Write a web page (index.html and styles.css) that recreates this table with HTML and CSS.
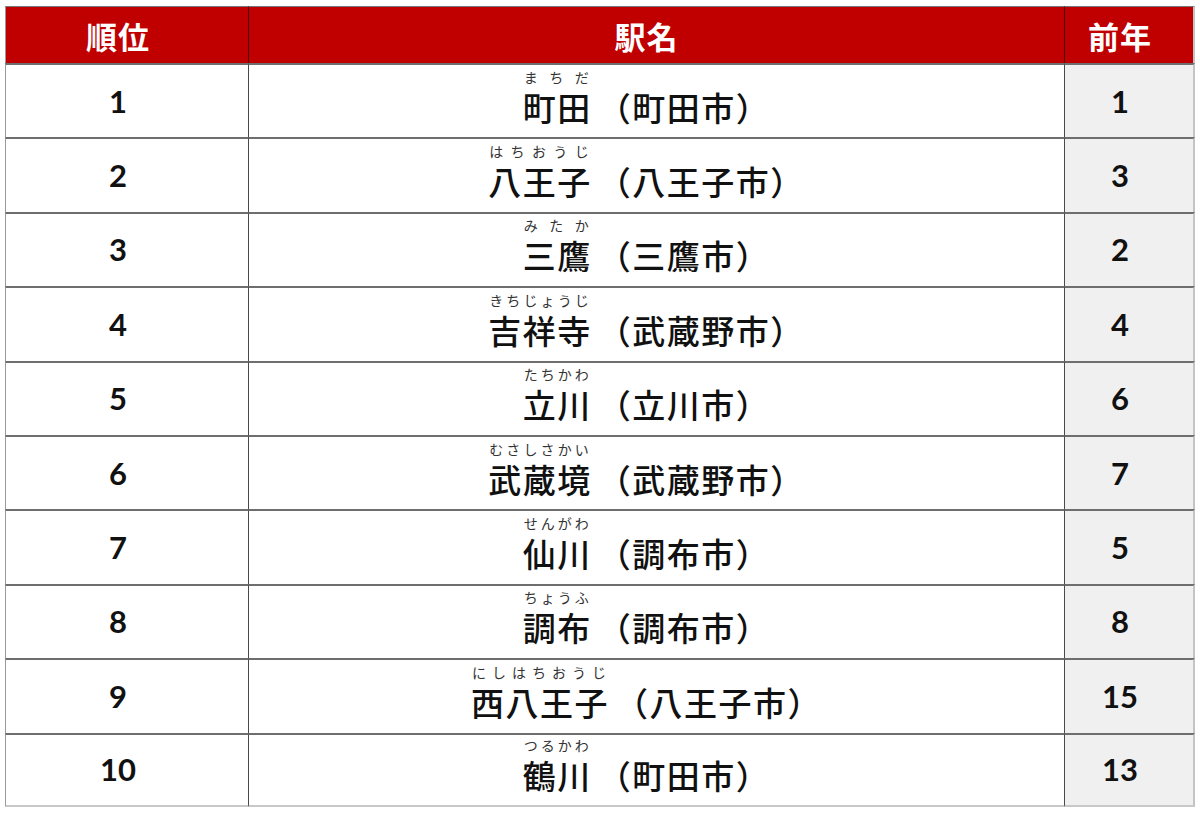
FILE: index.html
```html
<!DOCTYPE html>
<html lang="ja">
<head>
<meta charset="utf-8">
<link rel="stylesheet" href="styles.css">
</head>
<body>
<div class="rank">
  <div class="cell head first">順位</div><div class="cell head mid">駅名</div><div class="cell head last">前年</div>

  <div class="cell num first">1</div><div class="cell name"><span class="rb"><span class="rt">まちだ</span>町田</span>（町田市）</div><div class="cell num last">1</div>
  <div class="cell num first">2</div><div class="cell name"><span class="rb"><span class="rt">はちおうじ</span>八王子</span>（八王子市）</div><div class="cell num last">3</div>
  <div class="cell num first">3</div><div class="cell name"><span class="rb"><span class="rt">みたか</span>三鷹</span>（三鷹市）</div><div class="cell num last">2</div>
  <div class="cell num first">4</div><div class="cell name"><span class="rb"><span class="rt">きちじょうじ</span>吉祥寺</span>（武蔵野市）</div><div class="cell num last">4</div>
  <div class="cell num first">5</div><div class="cell name"><span class="rb"><span class="rt">たちかわ</span>立川</span>（立川市）</div><div class="cell num last">6</div>
  <div class="cell num first">6</div><div class="cell name"><span class="rb"><span class="rt">むさしさかい</span>武蔵境</span>（武蔵野市）</div><div class="cell num last">7</div>
  <div class="cell num first">7</div><div class="cell name"><span class="rb"><span class="rt">せんがわ</span>仙川</span>（調布市）</div><div class="cell num last">5</div>
  <div class="cell num first">8</div><div class="cell name"><span class="rb"><span class="rt">ちょうふ</span>調布</span>（調布市）</div><div class="cell num last">8</div>
  <div class="cell num first">9</div><div class="cell name"><span class="rb"><span class="rt">にしはちおうじ</span>西八王子</span>（八王子市）</div><div class="cell num last">15</div>
  <div class="cell num first bottom">10</div><div class="cell name bottom"><span class="rb"><span class="rt">つるかわ</span>鶴川</span>（町田市）</div><div class="cell num last bottom">13</div>
</div>
</body>
</html>
```
FILE: styles.css
```css
html, body {
  margin: 0;
  padding: 0;
  background: #ffffff;
}
body {
  padding: 6px 0 0 5px;
  font-family: "Noto Sans CJK JP", "Noto Sans", sans-serif;
  color: #111;
}
.rank {
  display: grid;
  grid-template-columns: 243px 816px 131px;
  grid-template-rows: 57px repeat(10, 1fr);
  width: 1190px;
  height: 801px;
}
.cell {
  box-sizing: border-box;
  display: flex;
  align-items: center;
  justify-content: center;
  border-top: 2px solid #6e6e6e;
  border-left: 1px solid #4a4a4a;
  white-space: nowrap;
  min-width: 0;
}
.cell.first { border-left: 1px solid #9a9a9a; }
.cell.last { border-right: 2px solid #c4c4c4; background: #f0f0f0; }
.cell.bottom { border-bottom: 2px solid #c8c8c8; }
.head {
  background: #c00000;
  color: #ffffff;
  font-weight: 700;
  font-size: 31px;
  letter-spacing: 1px;
  line-height: 1;
  border-top: 1px solid #777;
  border-left: 1px solid #4a0000;
  padding-right: 18px;
}
.head.last { background: #c00000; border-right: 2px solid #c4c4c4; }
.head.mid { padding-right: 20px; }
.num {
  font-family: Lato, "Liberation Sans", sans-serif;
  font-weight: 700;
  font-size: 31px;
  line-height: 1;
  padding-right: 18px;
}
.name {
  font-size: 33px;
  font-weight: 500;
  letter-spacing: 1.5px;
  line-height: 1;
  padding-top: 12px;
  padding-right: 20px;
}
.rb {
  display: inline-block;
  position: relative;
  margin-right: 6px;
}
.rt {
  position: absolute;
  left: 1px;
  right: 3px;
  top: -21px;
  font-size: 14px;
  font-weight: 400;
  letter-spacing: 0;
  line-height: 1;
  color: #333;
  text-align: justify;
  text-align-last: justify;
}
```
